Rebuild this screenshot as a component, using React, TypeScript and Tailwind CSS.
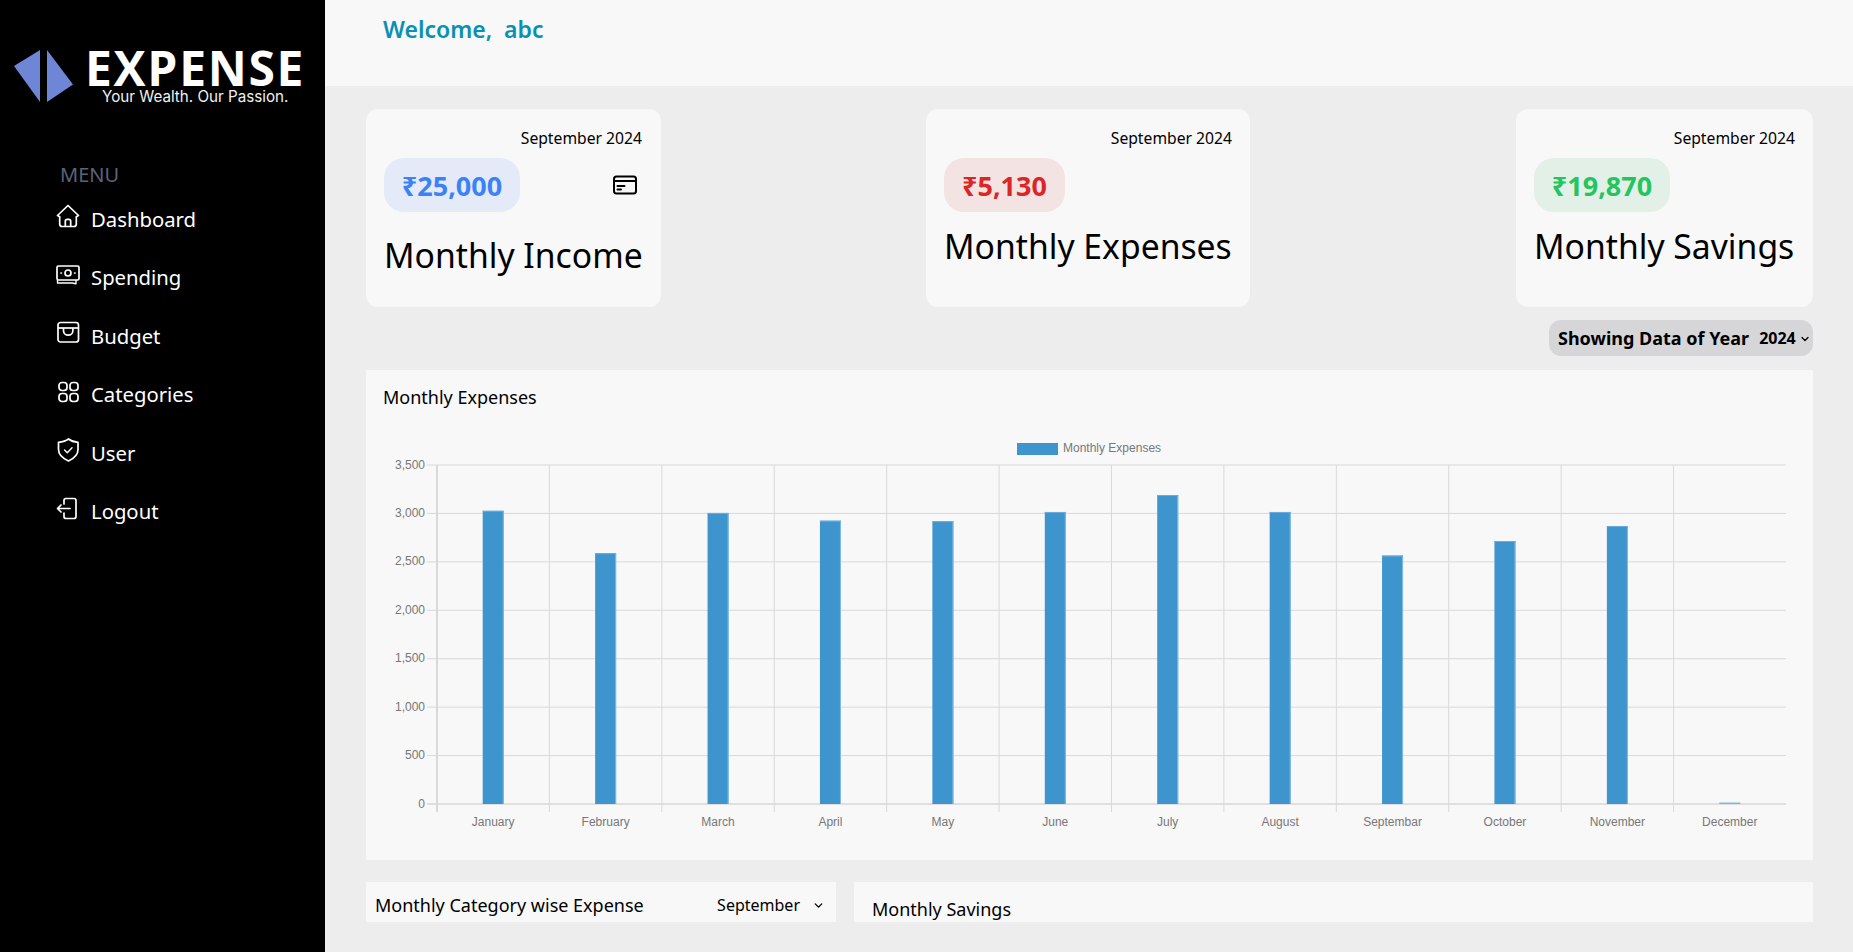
import { ChevronDown } from "lucide-react";

const months = [
  ["January", 3027],
  ["February", 2590],
  ["March", 3005],
  ["April", 2925],
  ["May", 2920],
  ["June", 3015],
  ["July", 3190],
  ["August", 3015],
  ["Septembar", 2565],
  ["October", 2715],
  ["November", 2870],
  ["December", 15],
] as const;

const ticks = [3500, 3000, 2500, 2000, 1500, 1000, 500, 0];

// chart geometry, viewBox uses page coordinates
const left = 437;
const right = 1786;
const top = 465;
const bottom = 804;
const step = (right - left) / 12;
const yFor = (v: number) => bottom - (v / 3500) * (bottom - top);

function HomeIcon() {
  return (
    <svg width="24" height="24" viewBox="0 0 24 24" fill="none" stroke="white" strokeWidth="1.7" strokeLinejoin="round">
      <path d="M1.500 11.500 12 1.500l10.500 10-2.200 1.200v7.300a2.500 2.500 0 0 1-2.500 2.500H6.200a2.500 2.500 0 0 1-2.500-2.500v-7.300z" />
      <path d="M9.300 22.300v-5a2 2 0 0 1 2-2h1.400a2 2 0 0 1 2 2v5" />
    </svg>
  );
}

function CashIcon() {
  return (
    <svg width="24" height="24" viewBox="0 0 24 24" fill="none" stroke="white" strokeWidth="1.7" strokeLinecap="round">
      <rect x="1" y="3" width="22" height="14" rx="1.500" />
      <circle cx="12" cy="10" r="3" />
      <path d="M5 10h.4M18.600 10h.4" />
      <path d="M1.500 20h15l3 .8M1.500 17.500v2.500M20 17.500v3.200" strokeWidth="1.400" />
    </svg>
  );
}

function WalletIcon() {
  return (
    <svg width="24" height="24" viewBox="0 0 24 24" fill="none" stroke="white" strokeWidth="1.7" strokeLinejoin="round">
      <rect x="2" y="1.500" width="20.500" height="19.500" rx="2.500" />
      <path d="M2 7h20.500" />
      <path d="M7.500 7v2.500a4.700 4.700 0 0 0 9.400 0V7" />
    </svg>
  );
}

function GridIcon() {
  return (
    <svg width="24" height="24" viewBox="0 0 24 24" fill="none" stroke="white" strokeWidth="1.7">
      <rect x="3" y="2.500" width="8" height="8" rx="3" />
      <rect x="14" y="2.500" width="8" height="8" rx="3" />
      <rect x="3" y="13.500" width="8" height="8" rx="3" />
      <rect x="14" y="13.500" width="8" height="8" rx="3" />
    </svg>
  );
}

function ShieldIcon() {
  return (
    <svg width="24" height="24" viewBox="0 0 24 24" fill="none" stroke="white" strokeWidth="1.7" strokeLinejoin="round" strokeLinecap="round">
      <path d="M12.500 1c2.500 2 5.500 3 9.500 3.300v7.200c0 5.500-4 9-9.500 11.500C7 20.500 2.500 17 2.500 11.500V4.300C6.500 4 10 3 12.500 1z" />
      <path d="m8.500 12 2.800 2.800 4.700-5" strokeWidth="1.400" />
    </svg>
  );
}

function LogoutIcon() {
  return (
    <svg width="24" height="24" viewBox="0 0 24 24" fill="none" stroke="white" strokeWidth="1.7" strokeLinejoin="round" strokeLinecap="round">
      <path d="M8 7V3.500A2 2 0 0 1 10 1.500h8a2 2 0 0 1 2 2v16a2 2 0 0 1-2 2h-8a2 2 0 0 1-2-2V16" />
      <path d="M14 11.500H1.500M5 8l-3.500 3.500L5 15" />
    </svg>
  );
}

function CardIcon() {
  return (
    <svg width="24" height="24" viewBox="0 0 24 24" fill="none" stroke="black" strokeWidth="2" strokeLinecap="round">
      <rect x="1" y="3.500" width="22" height="17" rx="2.500" />
      <path d="M1 8h22" />
      <path d="M4.500 13h7M4.500 16.500h3.500" />
    </svg>
  );
}

const menu = [
  ["Dashboard", <HomeIcon />],
  ["Spending", <CashIcon />],
  ["Budget", <WalletIcon />],
  ["Categories", <GridIcon />],
  ["User", <ShieldIcon />],
  ["Logout", <LogoutIcon />],
] as const;

function Chart() {
  return (
    <svg viewBox="366 424 1447 436" width="1447" height="436" className="block font-['Liberation_Sans',sans-serif]">
      {/* legend */}
      <rect x="1017" y="443" width="41" height="12" fill="#3e95cd" />
      <text x="1063" y="452" fontSize="12" fill="#777">Monthly Expenses</text>

      {/* horizontal grid */}
      {ticks.map((t) => (
        <g key={t}>
          <line x1={427} x2={right} y1={yFor(t)} y2={yFor(t)} stroke={t === 0 ? "#c6c6c6" : "#d9d9d9"} />
          <text x={425} y={yFor(t) + 3.500} textAnchor="end" fontSize="12" fill="#777">
            {t.toLocaleString("en-US")}
          </text>
        </g>
      ))}

      {/* vertical grid */}
      {months.map((_, i) => (
        <line
          key={i}
          x1={left + i * step}
          x2={left + i * step}
          y1={top}
          y2={812}
          stroke="#d9d9d9"
          strokeWidth={i === 0 ? 2 : 1}
        />
      ))}

      {/* bars */}
      {months.map(([name, v], i) => {
        const x = left + i * step + step / 2 - 10.500;
        return (
          <g key={name}>
            <rect x={x} y={yFor(v)} width="21" height={bottom - yFor(v)} fill={v < 100 ? "#7fb6dc" : "#3e95cd"} />
            {v >= 100 && <line x1={x + 20.500} x2={x + 20.500} y1={yFor(v)} y2={bottom} stroke="#7fbbe4" />}
            {v >= 100 && <line x1={x} x2={x + 21} y1={yFor(v) + 0.500} y2={yFor(v) + 0.500} stroke="#6aaddb" />}
            <text x={left + i * step + step / 2} y={826} textAnchor="middle" fontSize="12" fill="#777">
              {name}
            </text>
          </g>
        );
      })}
    </svg>
  );
}

export default function App() {
  return (
    <div className="flex h-screen overflow-hidden bg-[#ededed] font-['Noto_Sans',sans-serif] text-black">
      {/* Sidebar */}
      <aside className="w-[325px] shrink-0 bg-black text-white">
        <div className="flex h-[152px] items-start gap-[12px] pl-[14px] pt-[50px]">
          <svg width="59" height="52" viewBox="0 0 59 52" className="shrink-0">
            <path d="M26 0v52L0 16z" fill="#6f86d6" />
            <path d="M33 0v52l26-17.500z" fill="#6f86d6" />
          </svg>
          <div className="-mt-[3px] flex flex-col">
            <span className="font-['Open_Sans',sans-serif] text-[48px] font-bold leading-[41px] tracking-[1.700px] text-white">EXPENSE</span>
            <span className="pl-[17px] font-['Inter',sans-serif] text-[15.200px] leading-[18px] text-[#f0f0f0]">Your Wealth. Our Passion.</span>
          </div>
        </div>
        <div className="mt-[10px] pl-[60px] text-[20px] leading-[26px] text-[#5b6478]">MENU</div>
        <nav className="mt-[1.500px] flex flex-col pl-[56px]">
          {menu.map(([label, icon]) => (
            <div key={label} className="flex h-[58.500px] items-center gap-[11px]">
              <span className="-mt-[5px]">{icon}</span>
              <span className="text-[20.300px] leading-[28px]">{label}</span>
            </div>
          ))}
        </nav>
      </aside>

      {/* Main */}
      <div className="flex min-w-0 flex-1 flex-col">
        <header className="h-[86px] shrink-0 bg-[#f8f8f8] pl-[58px] pt-[12px]">
          <h1 className="text-[23px] font-semibold leading-[34px] text-[#0891b2]">Welcome,&nbsp; abc</h1>
        </header>

        <main className="mb-[30px] min-h-0 flex-1 overflow-hidden pl-[41px] pr-[40px] pt-[23px]">
          <div className="flex items-start">
            <div className="h-[198px] w-[295px] rounded-xl bg-[#f8f8f8] px-[18px] pt-[17px]">
              <p className="pr-[1px] text-right text-[15.700px] leading-[24px]">September 2024</p>
              <div className="mt-[8px] flex items-center justify-between pr-[6px]">
                <span className="flex h-[54px] w-[136px] items-center justify-center rounded-[20px] bg-[#e4eaf8] pt-[2px] text-[27px] font-bold text-[#3b82f6]">₹25,000</span>
                <CardIcon />
              </div>
              <h2 className="mt-[18px] whitespace-nowrap text-[33.700px] leading-[50px]">Monthly Income</h2>
            </div>

            <div className="ml-[265px] h-[198px] w-[324px] rounded-xl bg-[#f8f8f8] px-[18px] pt-[17px]">
              <p className="text-right text-[15.700px] leading-[24px]">September 2024</p>
              <span className="mt-[8px] flex h-[54px] w-[121px] items-center justify-center rounded-[20px] bg-[#f3e3e3] pt-[2px] text-[27px] font-bold text-[#dc2626]">₹5,130</span>
              <h2 className="mt-[9px] whitespace-nowrap text-[33.700px] leading-[50px]">Monthly Expenses</h2>
            </div>

            <div className="ml-auto h-[198px] w-[297px] rounded-xl bg-[#f8f8f8] px-[18px] pt-[17px]">
              <p className="text-right text-[15.700px] leading-[24px]">September 2024</p>
              <span className="mt-[8px] flex h-[54px] w-[136px] items-center justify-center rounded-[20px] bg-[#e2f0e7] pt-[2px] text-[27px] font-bold text-[#22c55e]">₹19,870</span>
              <h2 className="mt-[9px] whitespace-nowrap text-[33.700px] leading-[50px]">Monthly Savings</h2>
            </div>
          </div>

          <div className="mt-[13px] flex justify-end">
            <div className="flex h-[36px] w-[264px] items-center rounded-xl bg-[#d6d6d9] pl-[9px] font-bold">
              <span className="text-[18px]">Showing Data of Year</span>
              <span className="ml-[10px] text-[16px]">2024</span>
              <ChevronDown className="ml-[3px] mt-[2px] size-[12px]" strokeWidth={2.500} />
            </div>
          </div>

          <section className="mt-[14px] h-[490px] bg-[#f8f8f8]">
            <div className="h-[54px] pl-[17px] pt-[13px] text-[18px] leading-[28px]">Monthly Expenses</div>
            <Chart />
          </section>

          <div className="mt-[22px] flex gap-[18px]">
            <section className="flex h-[70px] w-[470px] shrink-0 items-start justify-between bg-[#f8f8f8] pl-[9px] pr-[11px] pt-[9px]">
              <span className="text-[18px] leading-[28px]">Monthly Category wise Expense</span>
              <span className="flex items-center gap-[12px] pt-[1px] text-[16px] leading-[26px]">
                September
                <ChevronDown className="size-[13px]" strokeWidth={2.500} />
              </span>
            </section>
            <section className="h-[70px] flex-1 bg-[#f8f8f8] pl-[18px] pt-[13px] text-[18px] leading-[28px]">Monthly Savings</section>
          </div>
        </main>
      </div>
    </div>
  );
}
